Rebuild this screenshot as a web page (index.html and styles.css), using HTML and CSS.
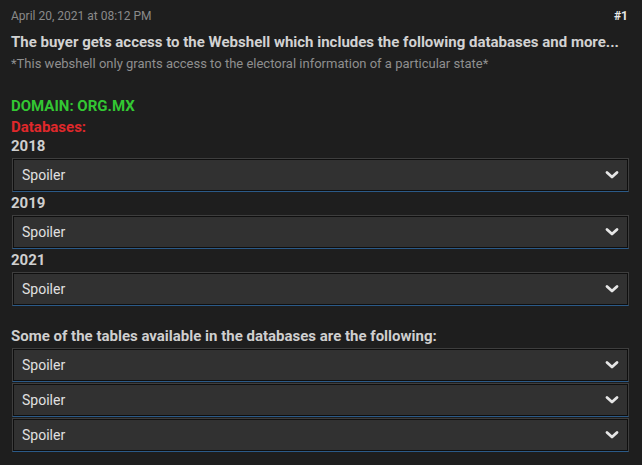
FILE: index.html
```html
<!DOCTYPE html>
<html>
<head>
<meta charset="utf-8">
<link rel="stylesheet" href="styles.css">
</head>
<body>
<div class="post">
  <div class="meta">
    <span class="date">April 20, 2021 at 08:12 PM</span>
    <span class="num">#1</span>
  </div>
  <div class="title">The buyer gets access to the Webshell which includes the following databases and more...</div>
  <div class="note">*This webshell only grants access to the electoral information of a particular state*</div>
  <div class="blank"></div>
  <div class="domain">DOMAIN: ORG.MX</div>
  <div class="dbs">Databases:</div>
  <div class="year">2018</div>
  <div class="spoiler"><span>Spoiler</span><svg class="chev" width="14" height="10" viewBox="0 0 14 10"><polyline points="2,2.5 7,7 12,2.5" fill="none" stroke="#e6e6e6" stroke-width="2.8" stroke-linecap="round" stroke-linejoin="round"/></svg></div>
  <div class="year">2019</div>
  <div class="spoiler"><span>Spoiler</span><svg class="chev" width="14" height="10" viewBox="0 0 14 10"><polyline points="2,2.5 7,7 12,2.5" fill="none" stroke="#e6e6e6" stroke-width="2.8" stroke-linecap="round" stroke-linejoin="round"/></svg></div>
  <div class="year">2021</div>
  <div class="spoiler"><span>Spoiler</span><svg class="chev" width="14" height="10" viewBox="0 0 14 10"><polyline points="2,2.5 7,7 12,2.5" fill="none" stroke="#e6e6e6" stroke-width="2.8" stroke-linecap="round" stroke-linejoin="round"/></svg></div>
  <div class="blank2"></div>
  <div class="year tables">Some of the tables available in the databases are the following:</div>
  <div class="spoiler"><span>Spoiler</span><svg class="chev" width="14" height="10" viewBox="0 0 14 10"><polyline points="2,2.5 7,7 12,2.5" fill="none" stroke="#e6e6e6" stroke-width="2.8" stroke-linecap="round" stroke-linejoin="round"/></svg></div>
  <div class="spoiler"><span>Spoiler</span><svg class="chev" width="14" height="10" viewBox="0 0 14 10"><polyline points="2,2.5 7,7 12,2.5" fill="none" stroke="#e6e6e6" stroke-width="2.8" stroke-linecap="round" stroke-linejoin="round"/></svg></div>
  <div class="spoiler"><span>Spoiler</span><svg class="chev" width="14" height="10" viewBox="0 0 14 10"><polyline points="2,2.5 7,7 12,2.5" fill="none" stroke="#e6e6e6" stroke-width="2.8" stroke-linecap="round" stroke-linejoin="round"/></svg></div>
</div>
</body>
</html>
```

FILE: styles.css
```css
html, body {
  margin: 0;
  padding: 0;
  background: #1e1e1e;
  height: 100%;
}
.post {
  font-family: Roboto, "Liberation Sans", sans-serif;
  padding: 6px 13px 0 12px;
  color: #cfcfcf;
}
.meta {
  display: flex;
  justify-content: space-between;
  align-items: center;
  height: 20px;
  margin-left: -1px;
}
.date {
  font-size: 12px;
  color: #8a8a8a;
}
.num {
  font-size: 12px;
  font-weight: bold;
  color: #e8e8e8;
  margin-right: 1px;
}
.title {
  font-size: 15px;
  font-weight: bold;
  line-height: 21px;
  margin-top: 6px;
  margin-left: -1px;
  color: #d2d2d2;
}
.note {
  font-size: 13px;
  color: #8f8f8f;
  line-height: 21px;
  margin-left: -1px;
}
.blank { height: 21px; }
.blank2 { height: 18px; }
.domain, .dbs, .year {
  font-size: 15px;
  font-weight: bold;
  margin-left: -1px;
}
.domain { color: #33c733; line-height: 22px; }
.dbs { color: #e0282b; line-height: 18px; margin-top: 1px; }
.year { line-height: 21px; color: #cfcfcf; }
.tables { line-height: 22px; }
.spoiler {
  box-sizing: border-box;
  height: 34px;
  margin: 1px 0;
  background: #313131;
  border: 1px solid #3e3e3e;
  border-bottom-color: #2b5a88;
  box-shadow: inset 0 0 0 1px #0f0f0f;
  display: flex;
  align-items: center;
  justify-content: space-between;
  padding: 0 9px 0 9px;
  font-size: 14px;
  color: #e0e0e0;
}
.chev { display: block; }
```
